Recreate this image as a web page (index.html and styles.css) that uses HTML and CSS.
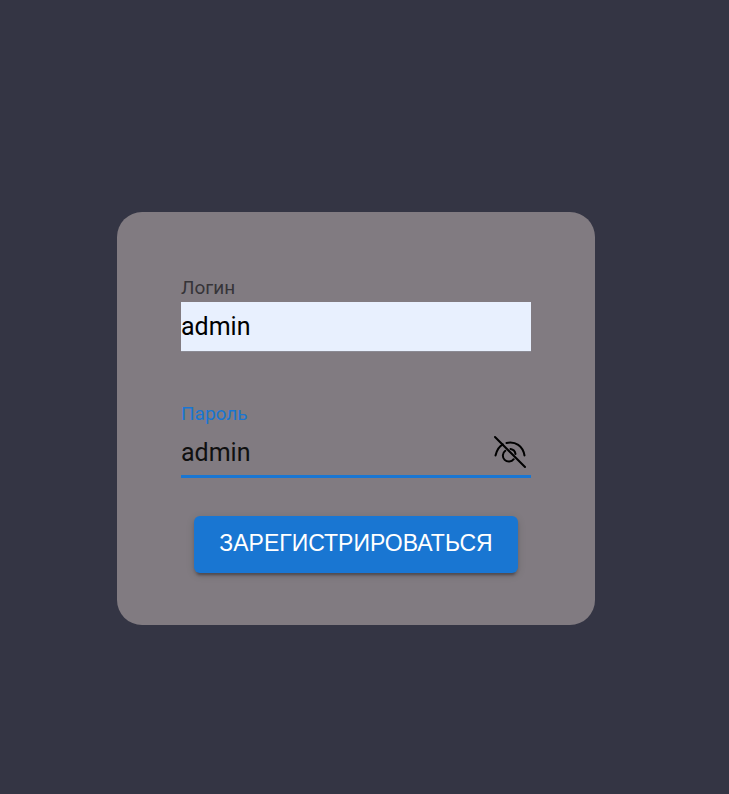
FILE: index.html
```
<!DOCTYPE html>
<html lang="ru">
<head>
<meta charset="utf-8">
<meta name="viewport" content="width=device-width, initial-scale=1">
<title>Регистрация</title>
<link rel="stylesheet" href="styles.css">
</head>
<body>
<main class="page">
  <form class="card">
    <div class="field">
      <label class="label" for="login">Логин</label>
      <div class="control control-filled">
        <input class="input" id="login" type="text" value="admin" autocomplete="off" spellcheck="false">
      </div>
    </div>
    <div class="field field-active">
      <label class="label" for="password">Пароль</label>
      <div class="control">
        <input class="input" id="password" type="text" value="admin" autocomplete="off" spellcheck="false">
        <button class="toggle" type="button" aria-label="Скрыть пароль">
          <svg class="icon" viewBox="0 0 34 34" fill="none" stroke="currentColor" stroke-width="2" stroke-linecap="round">
            <path d="M2 2 L32 32"/>
            <path d="M2.500 20.500 C3.800 15 6 11.500 9.800 9.400"/>
            <path d="M13.500 8 C22.500 6 29.800 11 31.500 20.500"/>
            <path d="M12.300 15.800 A6 6 0 1 0 20.700 24.200"/>
            <path d="M17.500 14 A6 6 0 0 1 22.500 19"/>
          </svg>
        </button>
      </div>
    </div>
    <button class="submit" type="submit">ЗАРЕГИСТРИРОВАТЬСЯ</button>
  </form>
</main>
</body>
</html>
```

FILE: styles.css
```
* {
  box-sizing: border-box;
}

body {
  margin: 0;
  background: #343544;
  font-family: Roboto, "Liberation Sans", sans-serif;
}

.page {
  display: flex;
  justify-content: center;
  align-items: flex-start;
  min-height: 100vh;
  padding: 212px 17px 48px 0;
}

.card {
  display: flex;
  flex-direction: column;
  align-items: center;
  width: 100%;
  max-width: 478px;
  padding: 64px 64px 52px;
  border-radius: 25px;
  background: #817b81;
}

.field {
  display: flex;
  flex-direction: column;
  width: 100%;
  margin-bottom: 36px;
}

.label {
  font-size: 19px;
  line-height: 24px;
  margin-bottom: 2px;
  color: #363438;
}

.control {
  display: flex;
  align-items: center;
  height: 52px;
  padding-bottom: 3px;
}

.control-filled .input {
  background: #e8f0fe;
  color: #000;
  box-shadow: 0 1px #8b8a93;
}

.input {
  flex: 1;
  min-width: 0;
  height: 49px;
  padding: 0;
  border: 0;
  outline: 0;
  background: transparent;
  color: #101010;
  font: inherit;
  font-size: 25px;
}

.field + .field {
  margin-top: 12px;
}

.field-active .label {
  color: #1976d2;
}

.field-active .control {
  height: 50px;
  padding-bottom: 0;
  border-bottom: 3px solid #1976d2;
}

.field-active .input {
  height: 47px;
  padding-top: 2px;
}

.field-active {
  margin-bottom: 38px;
}

.toggle {
  display: flex;
  padding: 0;
  margin-right: 4px;
  border: 0;
  background: transparent;
  color: #000;
}

.icon {
  width: 34px;
  height: 34px;
}

.submit {
  height: 57px;
  padding: 0 25px 2px;
  border: 0;
  border-radius: 6px;
  background: #1976d2;
  color: #fff;
  font-family: "Liberation Sans", Arial, sans-serif;
  font-size: 23px;
  white-space: nowrap;
  box-shadow: 0 5px 2px -3px rgba(0, 0, 0, 0.2), 0 3px 3px rgba(0, 0, 0, 0.14), 0 2px 8px rgba(0, 0, 0, 0.12);
}
```
